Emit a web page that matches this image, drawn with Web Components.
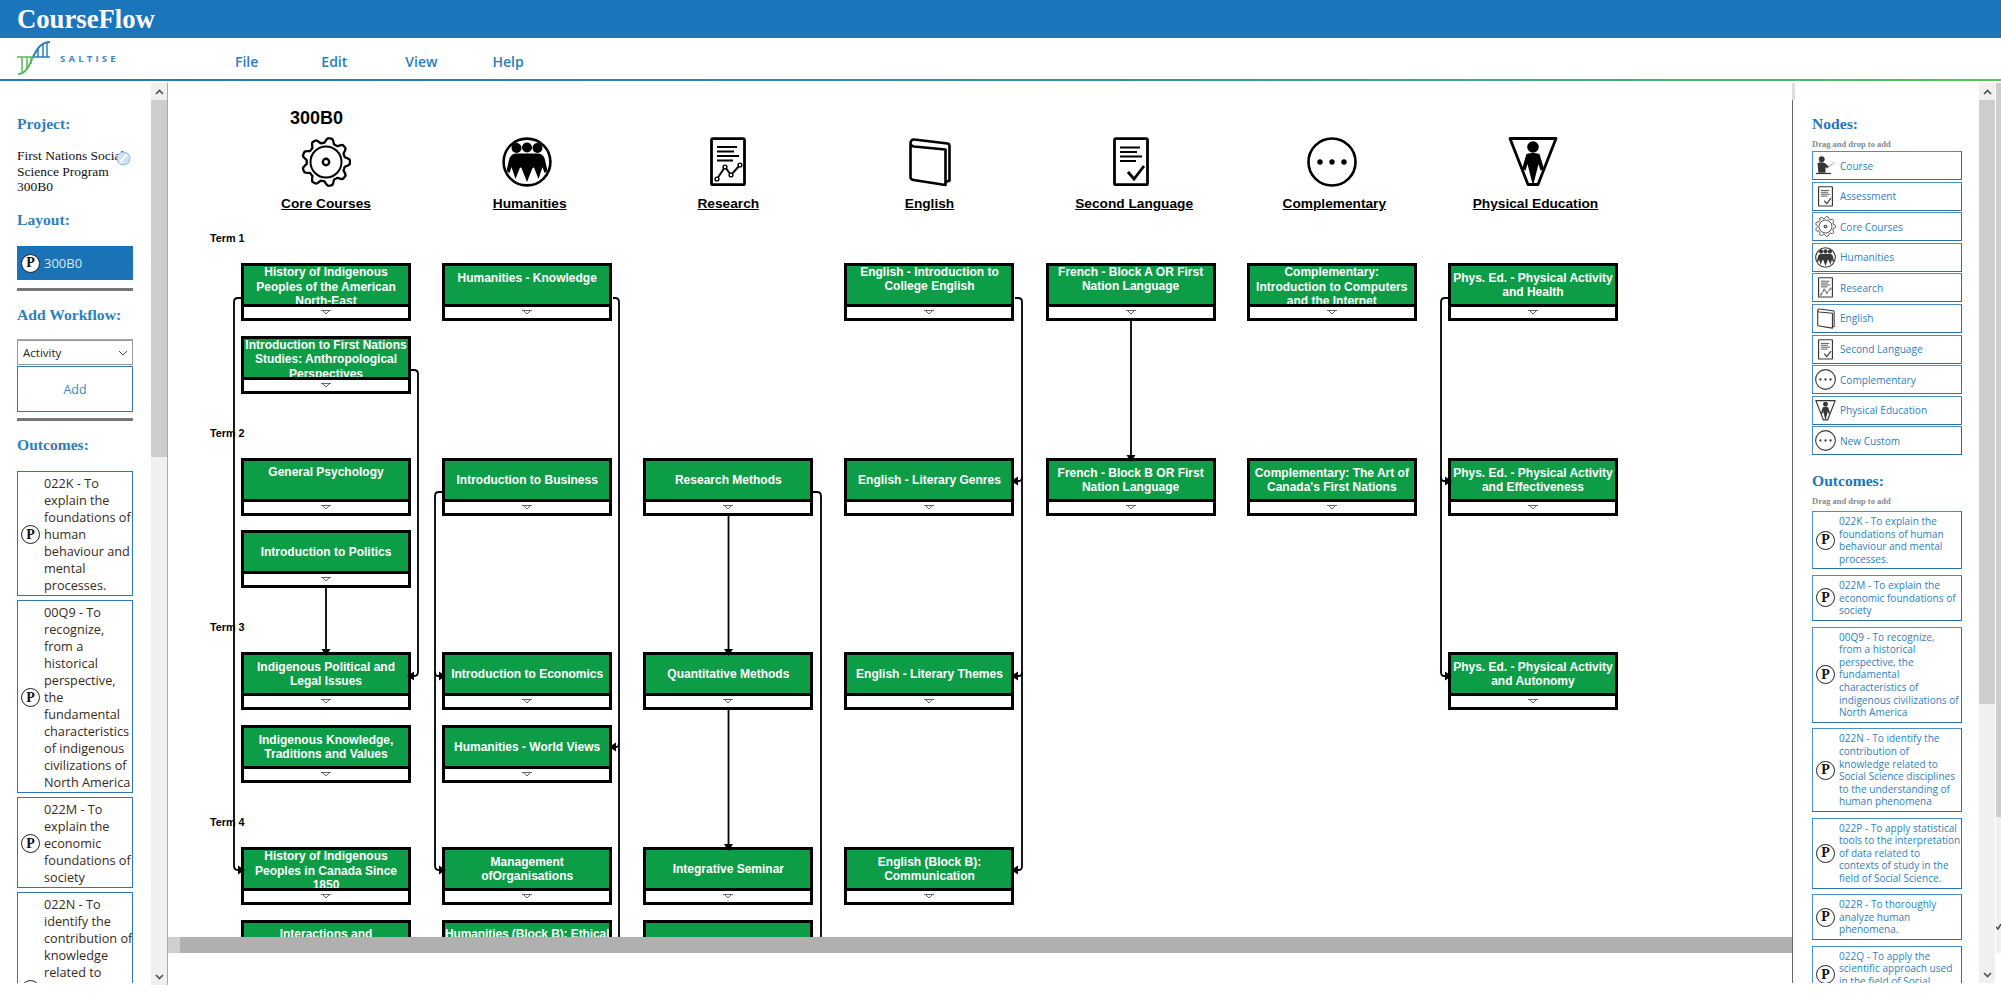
<!DOCTYPE html>
<html lang="en">
<head>
<meta charset="utf-8">
<title>CourseFlow</title>
<style>
  html, body { margin: 0; padding: 0; background: #fff; }
  body { width: 2001px; height: 1007px; overflow: hidden; font-family: "Liberation Sans", sans-serif; }
</style>
</head>
<body>
<cf-app>
  <cf-header slot="header">CourseFlow</cf-header>
  <cf-menubar slot="menu"></cf-menubar>

  <cf-left-panel slot="left">
    <cf-outcome-card>022K - To<br>explain the<br>foundations of<br>human<br>behaviour and<br>mental<br>processes.</cf-outcome-card>
    <cf-outcome-card>00Q9 - To<br>recognize,<br>from a<br>historical<br>perspective,<br>the<br>fundamental<br>characteristics<br>of indigenous<br>civilizations of<br>North America</cf-outcome-card>
    <cf-outcome-card>022M - To<br>explain the<br>economic<br>foundations of<br>society</cf-outcome-card>
    <cf-outcome-card>022N - To<br>identify the<br>contribution of<br>knowledge<br>related to<br>Social Science<br>disciplines to<br>the<br>understanding<br>of human<br>phenomena</cf-outcome-card>
  </cf-left-panel>

  <cf-workflow slot="main" title-text="300B0">
    <cf-column-head slot="heads" icon="gear">Core Courses</cf-column-head>
    <cf-column-head slot="heads" icon="people" shift="5">Humanities</cf-column-head>
    <cf-column-head slot="heads" icon="research">Research</cf-column-head>
    <cf-column-head slot="heads" icon="book">English</cf-column-head>
    <cf-column-head slot="heads" icon="language" shift="7">Second Language</cf-column-head>
    <cf-column-head slot="heads" icon="dots" shift="5">Complementary</cf-column-head>
    <cf-column-head slot="heads" icon="phys" shift="5">Physical Education</cf-column-head>

    <cf-term label="Term 1">
      <cf-node col="1" row="1" top="-1" style="--node-lh:14.6px">History of Indigenous<br>Peoples of the American<br>North-East</cf-node>
      <cf-node col="2" row="1" top="5">Humanities - Knowledge</cf-node>
      <cf-node col="4" row="1" top="-1">English - Introduction to<br>College English</cf-node>
      <cf-node col="5" row="1" top="-1">French - Block A OR First<br>Nation Language</cf-node>
      <cf-node col="6" row="1" top="-1" style="--node-lh:14.6px">Complementary:<br>Introduction to Computers<br>and the Internet</cf-node>
      <cf-node col="7" row="1">Phys. Ed. - Physical Activity<br>and Health</cf-node>
      <cf-node col="1" row="2" top="-1" style="--node-lh:14.6px">Introduction to First Nations<br>Studies: Anthropological<br>Perspectives</cf-node>
    </cf-term>
    <cf-term label="Term 2">
      <cf-node col="1" row="1" top="4">General Psychology</cf-node>
      <cf-node col="2" row="1">Introduction to Business</cf-node>
      <cf-node col="3" row="1">Research Methods</cf-node>
      <cf-node col="4" row="1">English - Literary Genres</cf-node>
      <cf-node col="5" row="1">French - Block B OR First<br>Nation Language</cf-node>
      <cf-node col="6" row="1">Complementary: The Art of<br>Canada's First Nations</cf-node>
      <cf-node col="7" row="1">Phys. Ed. - Physical Activity<br>and Effectiveness</cf-node>
      <cf-node col="1" row="2">Introduction to Politics</cf-node>
    </cf-term>
    <cf-term label="Term 3">
      <cf-node col="1" row="1">Indigenous Political and<br>Legal Issues</cf-node>
      <cf-node col="2" row="1">Introduction to Economics</cf-node>
      <cf-node col="3" row="1">Quantitative Methods</cf-node>
      <cf-node col="4" row="1">English - Literary Themes</cf-node>
      <cf-node col="7" row="1">Phys. Ed. - Physical Activity<br>and Autonomy</cf-node>
      <cf-node col="1" row="2">Indigenous Knowledge,<br>Traditions and Values</cf-node>
      <cf-node col="2" row="2">Humanities - World Views</cf-node>
    </cf-term>
    <cf-term label="Term 4">
      <cf-node col="1" row="1" top="-1" style="--node-lh:14.6px">History of Indigenous<br>Peoples in Canada Since<br>1850</cf-node>
      <cf-node col="2" row="1">Management<br>ofOrganisations</cf-node>
      <cf-node col="3" row="1">Integrative Seminar</cf-node>
      <cf-node col="4" row="1">English (Block B):<br>Communication</cf-node>
      <cf-node col="1" row="2" top="4">Interactions and</cf-node>
      <cf-node col="2" row="2" top="4" style="letter-spacing:-.1px">Humanities (Block B): Ethical</cf-node>
      <cf-node col="3" row="2"></cf-node>
    </cf-term>
  </cf-workflow>

  <cf-right-panel slot="right">
    <cf-node-type slot="nodes" icon="course">Course</cf-node-type>
    <cf-node-type slot="nodes" icon="language">Assessment</cf-node-type>
    <cf-node-type slot="nodes" icon="gear">Core Courses</cf-node-type>
    <cf-node-type slot="nodes" icon="people">Humanities</cf-node-type>
    <cf-node-type slot="nodes" icon="research">Research</cf-node-type>
    <cf-node-type slot="nodes" icon="book">English</cf-node-type>
    <cf-node-type slot="nodes" icon="language">Second Language</cf-node-type>
    <cf-node-type slot="nodes" icon="dots">Complementary</cf-node-type>
    <cf-node-type slot="nodes" icon="phys">Physical Education</cf-node-type>
    <cf-node-type slot="nodes" icon="dots">New Custom</cf-node-type>

    <cf-outcome-card small slot="outcomes">022K - To explain the<br>foundations of human<br>behaviour and mental<br>processes.</cf-outcome-card>
    <cf-outcome-card small slot="outcomes">022M - To explain the<br>economic foundations of<br>society</cf-outcome-card>
    <cf-outcome-card small slot="outcomes">00Q9 - To recognize,<br>from a historical<br>perspective, the<br>fundamental<br>characteristics of<br>indigenous civilizations of<br>North America</cf-outcome-card>
    <cf-outcome-card small slot="outcomes">022N - To identify the<br>contribution of<br>knowledge related to<br>Social Science disciplines<br>to the understanding of<br>human phenomena</cf-outcome-card>
    <cf-outcome-card small slot="outcomes">022P - To apply statistical<br>tools to the interpretation<br>of data related to<br>contexts of study in the<br>field of Social Science.</cf-outcome-card>
    <cf-outcome-card small slot="outcomes">022R - To thoroughly<br>analyze human<br>phenomena.</cf-outcome-card>
    <cf-outcome-card small slot="outcomes">022Q - To apply the<br>scientific approach used<br>in the field of Social<br>Science.</cf-outcome-card>
  </cf-right-panel>
</cf-app>

<script>
const UI_FONT = '"Open Sans", "Liberation Sans", sans-serif';

function gearPath() {
  let d = '';
  for (let i = 0; i <= 180; i++) {
    const a = (i / 180) * Math.PI * 2;
    const wave = Math.max(-1, Math.min(1, Math.cos(a * 9) * 1.5));
    const r = 21.6 + wave * 2.3;
    d += (i ? 'L' : 'M') + (25 + r * Math.cos(a)).toFixed(2) + ' ' + (25 + r * Math.sin(a)).toFixed(2);
  }
  return d + 'Z';
}

const ICONS = {
  gear: `<path d="${gearPath()}" fill="none" stroke="#000" stroke-width="2.3"/>
    <circle cx="25" cy="25" r="15.5" fill="none" stroke="#000" stroke-width="2"/>
    <circle cx="25" cy="25" r="3.2" fill="none" stroke="#000" stroke-width="2.4"/>`,
  people: `<circle cx="25" cy="25" r="23.4" fill="none" stroke="#000" stroke-width="2.6"/>
    <circle cx="14.5" cy="11" r="5"/><circle cx="25" cy="10.5" r="5"/><circle cx="35.5" cy="11" r="5"/>
    <path d="M7 23Q8 17 14 16.5H36Q42 17 43 23L45.5 34L42.5 36L40.5 30L36.5 42L32 30.5L30.5 31L25 45L19.5 31L18 30.5L13.500 42L9.500 30L7.500 36L4.500 34Z"/>`,
  research: `<rect x="8.500" y="1.700" width="33" height="46" rx="1.500" fill="none" stroke="#000" stroke-width="2.800"/>
    <path d="M14 10H34M14 14.500H31M14 19H36M14 23.500H30" stroke="#000" stroke-width="1.900" fill="none"/>
    <path d="M14 42L22 30L28 38L37 28" stroke="#000" stroke-width="1.900" fill="none"/>
    <circle cx="14" cy="42" r="1.900" fill="#fff" stroke="#000" stroke-width="1.400"/>
    <circle cx="22" cy="30" r="1.900" fill="#fff" stroke="#000" stroke-width="1.400"/>
    <circle cx="28" cy="38" r="1.900" fill="#fff" stroke="#000" stroke-width="1.400"/>
    <circle cx="37" cy="28" r="1.900" fill="#fff" stroke="#000" stroke-width="1.400"/>`,
  book: `<path d="M10 2.500L43.500 6.500Q45.500 7 45.500 9V43.500L41.500 45" fill="none" stroke="#000" stroke-width="2.600"/>
    <path d="M10 2.500Q6.500 2.500 6.500 6.500V40Q6.500 42.500 9.500 43L41.500 48V12.500L10 9.500Q6.500 9 6.500 6.500" fill="none" stroke="#000" stroke-width="2.600" stroke-linejoin="round"/>`,
  language: `<rect x="8.500" y="1.700" width="33" height="46" rx="1.500" fill="none" stroke="#000" stroke-width="2.800"/>
    <path d="M14 10.500H34M14 15H31M14 19.500H36M14 24H30" stroke="#000" stroke-width="1.900" fill="none"/>
    <path d="M22 35L28 42L38 29" stroke="#000" stroke-width="2.800" fill="none"/>`,
  dots: `<circle cx="25" cy="25" r="23.500" fill="none" stroke="#000" stroke-width="2.600"/>
    <circle cx="13" cy="25" r="2.700"/><circle cx="25" cy="25" r="2.700"/><circle cx="37" cy="25" r="2.700"/>`,
  phys: `<path d="M2 1.500H48L30 47.500H20Z" fill="none" stroke="#000" stroke-width="2.800" stroke-linejoin="round"/>
    <circle cx="25" cy="10" r="5.800"/>
    <path d="M18.500 17Q25 15 31.500 17L36 32L32.500 33.500L30.500 27L25.500 47H24.500L19.500 27L17.500 33.500L14 32Z"/>`,
  course: `<circle cx="16" cy="10" r="7"/>
    <path d="M6 19Q16 15 25 20L33 28L30 32L25 29V42H8Z"/>
    <path d="M29 30L47 18" stroke="#777" stroke-width="2" fill="none"/>
    <path d="M2 44H38" stroke="#000" stroke-width="3" fill="none"/>`,
};

class CfIcon extends HTMLElement {
  constructor() {
    super();
    this._shadowRoot = this.attachShadow({ mode: 'open' });
  }

  connectedCallback() {
    const size = this.getAttribute('size') || 50;
    this._shadowRoot.innerHTML = `
      <style>
        :host { display: inline-block; width: ${size}px; height: ${size}px; flex: none; }
        svg { display: block; width: 100%; height: 100%; }
      </style>
      <svg viewBox="0 0 50 50" aria-hidden="true">${ICONS[this.getAttribute('name')] || ''}</svg>`;
  }
}
customElements.define('cf-icon', CfIcon);

class CfPBadge extends HTMLElement {
  constructor() {
    super();
    this._shadowRoot = this.attachShadow({ mode: 'open' });
    this._shadowRoot.innerHTML = `
      <style>
        :host {
          display: flex; flex: none; align-items: center; justify-content: center;
          width: 19px; height: 19px; box-sizing: border-box;
          border: 1.5px solid #222; border-radius: 50%; background: #fff;
          color: #111; font: bold 14px/1 "Liberation Serif", serif;
        }
      </style>P`;
  }
}
customElements.define('cf-p-badge', CfPBadge);

class CfHeader extends HTMLElement {
  constructor() {
    super();
    this._shadowRoot = this.attachShadow({ mode: 'open' });
    this._shadowRoot.innerHTML = `
      <style>
        :host {
          display: flex; align-items: center; height: 38px; padding-left: 17px;
          background: #1b75bb; color: #fff;
          font: bold 26.7px "Liberation Serif", serif;
        }
      </style>
      <slot></slot>`;
  }
}
customElements.define('cf-header', CfHeader);

class CfMenubar extends HTMLElement {
  constructor() {
    super();
    this._shadowRoot = this.attachShadow({ mode: 'open' });
    this._shadowRoot.innerHTML = `
      <style>
        :host {
          display: flex; align-items: center; height: 43px; box-sizing: border-box;
          padding: 0 0 0 17px; position: relative;
          border-bottom: 2px solid; border-image: linear-gradient(90deg, #2279b6, #2f93a0 55%, #57c45c) 1;
          font-family: ${UI_FONT};
        }
        .logo { display: flex; align-items: center; width: 218px; margin-top: -1px; }
        svg { width: 34px; height: 36px; display: block; }
        .brand { margin-left: 9px; color: #3c87c6; font-size: 9.500px; font-weight: 700; letter-spacing: 3.200px; }
        nav { display: flex; color: #2a7dbd; font-size: 14px; font-weight: 600; margin-top: 6px; }
        nav span:nth-child(2) { margin-left: 63px; }
        nav span:nth-child(3) { margin-left: 58px; }
        nav span:nth-child(4) { margin-left: 55px; }
      </style>
      <div class="logo">
        <svg viewBox="0 0 34 36" fill="none" stroke-width="1.500">
          <g stroke="#5cb85c">
            <path d="M1 34C9 34 12 26 16 17" stroke-width="2"/>
            <path d="M0 17H17M5 17V33M10 17V30M14 17V24"/>
          </g>
          <g stroke="#2c7fb8">
            <path d="M16 17C20 9 24 2 33 2" stroke-width="2"/>
            <path d="M17 17H33M21 17V9M26 17V4M30 17V2"/>
          </g>
        </svg>
        <span class="brand">SALTISE</span>
      </div>
      <nav><span>File</span><span>Edit</span><span>View</span><span>Help</span></nav>`;
  }
}
customElements.define('cf-menubar', CfMenubar);

// fake native scrollbar, the thumb length is given in px
class CfScrollbar extends HTMLElement {
  constructor() {
    super();
    this._shadowRoot = this.attachShadow({ mode: 'open' });
  }

  connectedCallback() {
    const thumb = this.getAttribute('thumb') || 100;
    this._shadowRoot.innerHTML = `
      <style>
        :host { display: flex; flex-direction: column; width: 17px; flex: none; background: #f0f0f0; box-sizing: border-box; }
        .btn { height: 17px; display: flex; align-items: center; justify-content: center; flex: none; }
        .thumb { height: ${thumb}px; background: #cdcdcd; flex: none; }
        .track { flex: 1; }
        svg { width: 9px; height: 6px; display: block; }
      </style>
      <div class="btn"><svg viewBox="0 0 9 6"><path d="M1 5L4.500 1.500L8 5" fill="none" stroke="#505050" stroke-width="1.600"/></svg></div>
      <div class="thumb"></div>
      <div class="track"></div>
      <div class="btn"><svg viewBox="0 0 9 6"><path d="M1 1L4.500 4.500L8 1" fill="none" stroke="#505050" stroke-width="1.600"/></svg></div>`;
  }
}
customElements.define('cf-scrollbar', CfScrollbar);

class CfOutcomeCard extends HTMLElement {
  constructor() {
    super();
    this._shadowRoot = this.attachShadow({ mode: 'open' });
  }

  connectedCallback() {
    const small = this.hasAttribute('small');
    this._shadowRoot.innerHTML = `
      <style>
        :host {
          display: flex; align-items: center; box-sizing: border-box;
          background: #fff; white-space: nowrap; overflow: hidden;
          font-family: ${UI_FONT};
          ${small
            ? `width: 150px; padding: 3px 2px 3px 3px; gap: 4px; border: 1.500px solid #4a8fc6; border-bottom-color: #2a6fa6; border-right-color: #2a6fa6;
               color: #2f7fc1; font-size: 10.050px; line-height: 12.600px; margin-bottom: 5.700px;`
            : `width: 116px; padding: 3px 0 1px 3px; gap: 4px; border: 1px solid #2c78b4;
               color: #3a2a20; font-size: 12.700px; line-height: 17px; margin-bottom: 4px;`}
        }
      </style>
      <cf-p-badge></cf-p-badge>
      <div><slot></slot></div>`;
  }
}
customElements.define('cf-outcome-card', CfOutcomeCard);

class CfLeftPanel extends HTMLElement {
  constructor() {
    super();
    this._shadowRoot = this.attachShadow({ mode: 'open' });
    this._shadowRoot.innerHTML = `
      <style>
        :host { display: flex; align-items: flex-start; width: 168px; flex: none; height: 902px; }
        .content { width: 151px; height: 900px; box-sizing: border-box; padding: 32px 0 0 17px; overflow: hidden; position: relative; }
        h3 { margin: 0; color: #2d7fc0; font: bold 15.600px/18px "Liberation Serif", serif; }
        .name { margin: 15px 0 16px; width: 108px; height: 47px; overflow: hidden; color: #111;
          font: 13.500px/15.700px "Liberation Serif", serif; white-space: nowrap; }
        .pencil { position: absolute; left: 116px; top: 68px; width: 15px; height: 15px; }
        .layout { display: flex; align-items: center; gap: 4px; box-sizing: border-box; width: 116px; height: 34px;
          margin-top: 17px; padding-left: 4px; background: #1b72b6; color: #d9e7f3; font: 13px ${UI_FONT}; }
        hr { margin: 0; border: 0; width: 116px; }
        .thick { height: 3px; background: #777; }
        .thin { height: 1px; background: #aaa; }
        .select { position: relative; width: 116px; height: 25px; }
        select { display: block; width: 100%; height: 100%; box-sizing: border-box; background: #fff; border: 1px solid #999;
          color: #222; font: 11.500px ${UI_FONT}; padding-left: 5px; border-radius: 0; appearance: none; }
        .select svg { position: absolute; right: 5px; top: 10px; width: 10px; height: 6px; pointer-events: none; }
        button { display: block; width: 116px; height: 46px; margin-top: 1px; background: #fff; border: 1px solid #2c78b4;
          box-sizing: border-box; color: #3a88c8; font: 12.500px ${UI_FONT}; padding: 0; }
        cf-scrollbar { border-right: 1px solid #aaa; height: 902px; }
      </style>
      <div class="content">
        <h3>Project:</h3>
        <div class="name">First Nations Social<br>Science Program<br>300B0</div>
        <svg class="pencil" viewBox="0 0 15 15">
          <circle cx="7.500" cy="7.500" r="6.500" fill="#cfe2f3" stroke="#8db8dd" stroke-width="1"/>
          <path d="M3.500 11.500L11 3.500" stroke="#fff" stroke-width="2"/>
        </svg>
        <h3>Layout:</h3>
        <div class="layout"><cf-p-badge></cf-p-badge><span>300B0</span></div>
        <hr class="thick" style="margin-top:8px">
        <h3 style="margin-top:15px">Add Workflow:</h3>
        <hr class="thin" style="margin-top:15px">
        <div class="select">
          <select><option>Activity</option></select>
          <svg viewBox="0 0 10 6"><path d="M1 1L5 5L9 1" fill="none" stroke="#555" stroke-width="1"/></svg>
        </div>
        <button>Add</button>
        <hr class="thick" style="margin-top:6px">
        <h3 style="margin:15px 0 17px">Outcomes:</h3>
        <slot></slot>
      </div>
      <cf-scrollbar thumb="357"></cf-scrollbar>`;
  }
}
customElements.define('cf-left-panel', CfLeftPanel);

class CfColumnHead extends HTMLElement {
  constructor() {
    super();
    this._shadowRoot = this.attachShadow({ mode: 'open' });
  }

  connectedCallback() {
    this._shadowRoot.innerHTML = `
      <style>
        :host { display: flex; flex-direction: column; align-items: center; white-space: nowrap; }
        .label { margin: 9px 0 0 ${this.getAttribute('shift') || 0}px; color: #000; font: bold 13.700px/16px "Liberation Sans", sans-serif; text-decoration: underline; }
      </style>
      <cf-icon name="${this.getAttribute('icon')}"></cf-icon>
      <div class="label"><slot></slot></div>`;
  }
}
customElements.define('cf-column-head', CfColumnHead);

class CfNode extends HTMLElement {
  constructor() {
    super();
    this._shadowRoot = this.attachShadow({ mode: 'open' });
  }

  connectedCallback() {
    const top = this.getAttribute('top');
    this.style.gridColumn = this.getAttribute('col');
    this.style.gridRow = this.getAttribute('row');
    this._shadowRoot.innerHTML = `
      <style>
        :host { display: flex; flex-direction: column; box-sizing: border-box; height: 58px; border: 3px solid #000; background: #fff; }
        .title {
          height: 38px; flex: none; overflow: hidden; box-sizing: border-box;
          display: flex; justify-content: center; align-items: ${top === null ? 'center' : 'flex-start'};
          background: #0e9d47; color: #fff; text-align: center; white-space: nowrap;
          font: bold 12px/var(--node-lh, 14px) "Liberation Sans", sans-serif;
        }
        .text { margin-top: ${top === null ? 0 : top}px; }
        .foot { flex: 1; border-top: 3px solid #000; display: flex; align-items: center; justify-content: center; }
        svg { width: 10px; height: 5px; display: block; }
      </style>
      <div class="title"><div class="text"><slot></slot></div></div>
      <div class="foot"><svg viewBox="0 0 10 5"><path d="M0 .5H10M1.500 .5L5 4L8.500 .5" fill="none" stroke="#666" stroke-width="1"/></svg></div>`;
  }
}
customElements.define('cf-node', CfNode);

class CfTerm extends HTMLElement {
  constructor() {
    super();
    this._shadowRoot = this.attachShadow({ mode: 'open' });
  }

  connectedCallback() {
    this._shadowRoot.innerHTML = `
      <style>
        :host { display: block; margin-bottom: 32px; margin-left: -31px; }
        .label { height: 14px; margin-bottom: 18px; color: #000; font: bold 10.800px/14px "Liberation Sans", sans-serif; }
        .grid { display: grid; margin-left: 31px; grid-template-columns: repeat(7, 170px); column-gap: 31.170px; grid-template-rows: 58px 58px; row-gap: 14.670px; }
      </style>
      <div class="label">${this.getAttribute('label')}</div>
      <div class="grid"><slot></slot></div>`;
  }
}
customElements.define('cf-term', CfTerm);

class CfWorkflow extends HTMLElement {
  constructor() {
    super();
    this._shadowRoot = this.attachShadow({ mode: 'open' });
  }

  connectedCallback() {
    // edges are written in page coordinates, the group moves them into the canvas
    const edges = [
      'M241 298H238Q234 298 234 302V866Q234 870 238 870H240',
      'M411 370H414Q418 370 418 374V672Q418 676 414 676H412',
      'M613 298H615Q619 298 619 302V937',
      'M619 743Q619 747 616 747H614',
      'M442 492H439Q435 492 435 496V866Q435 870 439 870H441',
      'M435 672Q435 676 438 676H441',
      'M813 492H817Q821 492 821 496V937',
      'M728.500 516V651',
      'M728.500 710V846',
      'M326 587V651',
      'M1015 298H1018Q1022 298 1022 302V866Q1022 870 1019 870H1016',
      'M1022 477Q1022 481 1019 481H1016',
      'M1022 672Q1022 676 1019 676H1016',
      'M1131 321V457',
      'M1448 298H1445Q1441 298 1441 302V672Q1441 676 1444 676H1447',
      'M1441 477Q1441 481 1444 481H1447',
    ];
    this._shadowRoot.innerHTML = `
      <style>
        :host { display: block; flex: 1; position: relative; height: 854px; overflow: hidden; background: #fff; }
        .sheet { padding: 25px 0 0 73px; }
        h2 { margin: 0 0 9px 49px; height: 20px; color: #000; font: bold 18px/20px "Liberation Sans", sans-serif; }
        .heads { display: grid; grid-template-columns: repeat(7, 170px); column-gap: 31.170px; margin-bottom: 19px; }
        svg.edges { position: absolute; left: 0; top: 0; width: 100%; height: 100%; pointer-events: none; }
      </style>
      <div class="sheet">
        <h2>${this.getAttribute('title-text')}</h2>
        <div class="heads"><slot name="heads"></slot></div>
        <slot></slot>
      </div>
      <svg class="edges">
        <defs>
          <marker id="head" markerUnits="userSpaceOnUse" markerWidth="8" markerHeight="10" refX="2" refY="5" orient="auto">
            <path d="M0 .5L7 5L0 9.500Z" fill="#000"/>
          </marker>
        </defs>
        <g transform="translate(-168 -83)" fill="none" stroke="#000" stroke-width="1.800">
          ${edges.map((d) => `<path d="${d}"${d.endsWith('937') ? '' : ' marker-end="url(#head)"'}/>`).join('')}
        </g>
      </svg>`;
  }
}
customElements.define('cf-workflow', CfWorkflow);

class CfNodeType extends HTMLElement {
  constructor() {
    super();
    this._shadowRoot = this.attachShadow({ mode: 'open' });
  }

  connectedCallback() {
    this._shadowRoot.innerHTML = `
      <style>
        :host {
          display: flex; align-items: center; gap: 4px; box-sizing: border-box; width: 150px; height: 29px;
          margin-bottom: 1.600px; padding-left: 2px; background: #fff; white-space: nowrap;
          border: 1.500px solid #4a8fc6; border-bottom-color: #2a6fa6; border-right-color: #2a6fa6;
          color: #2f7fc1; font: 10.100px ${UI_FONT};
        }
        cf-icon { opacity: .78; }
      </style>
      <cf-icon name="${this.getAttribute('icon')}" size="21"></cf-icon>
      <slot></slot>`;
  }
}
customElements.define('cf-node-type', CfNodeType);

class CfRightPanel extends HTMLElement {
  constructor() {
    super();
    this._shadowRoot = this.attachShadow({ mode: 'open' });
    this._shadowRoot.innerHTML = `
      <style>
        :host { display: flex; width: 209px; flex: none; height: 900px; }
        .content {
          flex: 1; box-sizing: border-box; padding: 32px 0 0 20px; overflow: hidden;
          background: linear-gradient(#666, #666) 0 17px / 1px 100% no-repeat,
                      linear-gradient(#ddd, #ddd) 0 0 / 3px 17px no-repeat;
        }
        h3 { margin: 0; color: #1f76bb; font: bold 15.600px/18px "Liberation Serif", serif; }
        .hint { margin: 6px 0 1px; color: #8a8a8a; font: bold 8.500px/11px "Liberation Serif", serif; }
        .nodes { height: 305px; }
        .outer { width: 5px; flex: none; margin-left: 1px; display: flex; flex-direction: column; height: 870px; background: #f0f0f0; position: relative; }
        .outer div { height: 734px; background: #cdcdcd; }
        .outer svg { position: absolute; left: 0; top: 841px; width: 5px; height: 6px; }
      </style>
      <div class="content">
        <h3>Nodes:</h3>
        <div class="hint">Drag and drop to add</div>
        <div class="nodes"><slot name="nodes"></slot></div>
        <h3 style="margin-top:16px">Outcomes:</h3>
        <div class="hint" style="margin-bottom:4px">Drag and drop to add</div>
        <slot name="outcomes"></slot>
      </div>
      <cf-scrollbar thumb="604" style="width:16px"></cf-scrollbar>
      <div class="outer"><div></div><svg viewBox="0 0 5 6"><path d="M0 3L2 5L5 0" fill="none" stroke="#444" stroke-width="1.500"/></svg></div>`;
  }
}
customElements.define('cf-right-panel', CfRightPanel);

class CfApp extends HTMLElement {
  constructor() {
    super();
    this._shadowRoot = this.attachShadow({ mode: 'open' });
    this._shadowRoot.innerHTML = `
      <style>
        :host { display: block; width: 2001px; height: 1007px; }
        .row { display: flex; margin-top: 2px; }
        .centre { flex: 1; min-width: 0; }
        .hbar { height: 16px; background: linear-gradient(90deg, #cfcfcf 12px, #b0b0b0 12px); }
      </style>
      <slot name="header"></slot>
      <slot name="menu"></slot>
      <div class="row">
        <slot name="left"></slot>
        <div class="centre">
          <slot name="main"></slot>
          <div class="hbar"></div>
        </div>
        <slot name="right"></slot>
      </div>`;
  }
}
customElements.define('cf-app', CfApp);
</script>
</body>
</html>
